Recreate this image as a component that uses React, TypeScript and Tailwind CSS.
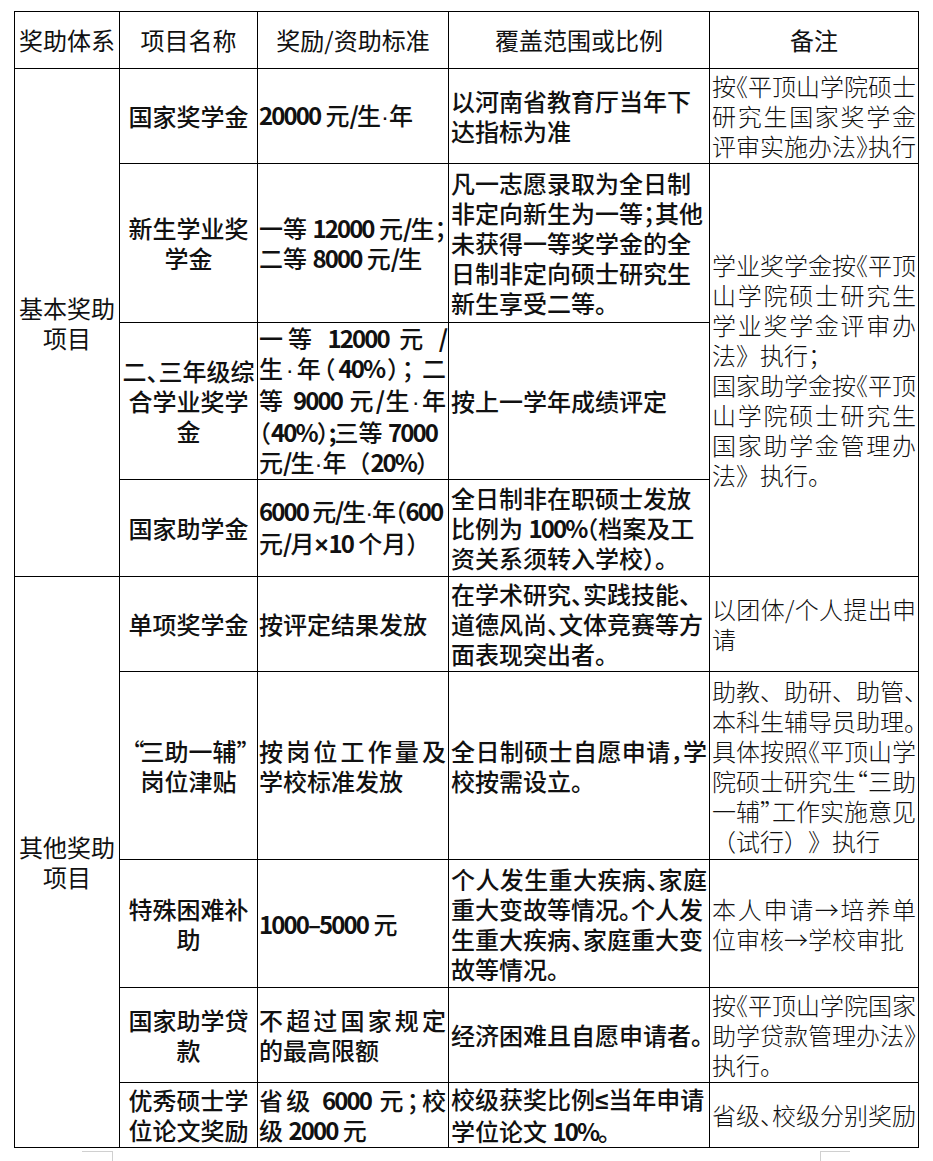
import React from 'react';

// ^x : punctuation glyph sits on the left half, trim the right half
// ~x : punctuation glyph sits on the right half, trim the left half
// {x / }x : quote mark set in its own box, glyph pushed right / left
// =  : line start marker, justify the whole line
// !  : line start marker, set the line a little tighter
const fmt = (s: string, bold?: boolean) =>
  s.split(/(\^.|~.|\{.|\}.|[0-9%/;–]+|[·×≤])/).map((p, i) => {
    if (!p) return null;
    if (p[0] === '^') return <span key={i} className="mr-[-0.5em]">{p[1]}</span>;
    if (p[0] === '~') return <span key={i} className="ml-[-0.5em]">{p[1]}</span>;
    if (p[0] === '{') return <span key={i} className="inline-block w-[20px] text-right">{p[1]}</span>;
    if (p[0] === '}') return <span key={i} className="inline-block w-[20px] text-left">{p[1]}</span>;
    if (/^[·×≤]$/.test(p))
      return (
        <span key={i} className={`font-['Liberation_Sans'] ${bold && p !== '·' ? 'font-bold' : ''}`}>
          {p}
        </span>
      );
    if (bold && /^[0-9%/;–]+$/.test(p))
      return (
        <span key={i} className="font-bold tracking-[-0.08em]">
          {p}
        </span>
      );
    return <React.Fragment key={i}>{p}</React.Fragment>;
  });

const Lines = ({ l, bold }: { l: string[]; bold?: boolean }) => (
  <>
    {l.map((s, i) => {
      const j = s.startsWith('=');
      const t = s.startsWith('!');
      const cls = j
        ? 'text-justify [text-align-last:justify]'
        : t
          ? 'whitespace-nowrap tracking-[-0.05em]'
          : 'whitespace-nowrap';
      return (
        <div key={i} className={cls}>
          {fmt(j || t ? s.slice(1) : s, bold)}
        </div>
      );
    })}
  </>
);

const td = 'border border-black align-middle p-0';
const cat = `${td} text-center font-normal`;
const name = `${td} text-center font-medium`;
const std = `${td} text-left font-medium pl-[1px] pr-[2px]`;
const scope = `${td} text-left font-medium px-[2px]`;
const note = `${td} text-left font-light px-[2px]`;

type Row = { h: string; c1?: string[]; span1?: number; name: string[]; std: string[]; scope: string[]; note?: string[]; span5?: number };

const rows: Row[] = [
  {
    h: 'h-[95px]',
    c1: ['基本奖助', '项目'],
    span1: 4,
    name: ['国家奖学金'],
    std: ['20000 元/生·年'],
    scope: ['以河南省教育厅当年下', '达指标为准'],
    note: ['按~《平顶山学院硕士', '=研究生国家奖学金', '评审实施办法^》执行'],
  },
  {
    h: 'h-[159px]',
    name: ['新生学业奖', '学金'],
    std: ['一等 12000 元/生^；', '二等 8000 元/生'],
    scope: ['凡一志愿录取为全日制', '非定向新生为一等^；其他', '未获得一等奖学金的全', '日制非定向硕士研究生', '新生享受二等。'],
    note: [
      '学业奖学金按~《平顶',
      '=山学院硕士研究生',
      '=学业奖学金评审办',
      '法》执行；',
      '国家助学金按~《平顶',
      '=山学院硕士研究生',
      '=国家助学金管理办',
      '法》执行。',
    ],
    span5: 3,
  },
  {
    h: 'h-[156px]',
    name: ['二^、三年级综', '合学业奖学', '金'],
    std: ['=一等 12000 元 /', '=生·年~（40%^）^； 二', '=等 9000 元/生·年', '~（40%^）;三等 7000', '元/生·年（20%）'],
    scope: ['按上一学年成绩评定'],
  },
  {
    h: 'h-[97px]',
    name: ['国家助学金'],
    std: ['!6000 元/生·年~（600', '元/月×10 个月）'],
    scope: ['全日制非在职硕士发放', '比例为 100%~（档案及工', '资关系须转入学校^）。'],
  },
  {
    h: 'h-[95px]',
    c1: ['其他奖助', '项目'],
    span1: 5,
    name: ['单项奖学金'],
    std: ['按评定结果发放'],
    scope: ['在学术研究^、实践技能^、', '道德风尚^、文体竞赛等方', '面表现突出者。'],
    note: ['=以团体/个人提出申', '请'],
  },
  {
    h: 'h-[188px]',
    name: ['{“三助一辅}”', '岗位津贴'],
    std: ['=按岗位工作量及', '学校标准发放'],
    scope: ['=全日制硕士自愿申请^，学', '校按需设立。'],
    note: ['助教、助研、助管^、', '本科生辅导员助理^。', '具体按照~《平顶山学', '院硕士研究生~“三助', '一辅^”工作实施意见', '（试行）》执行'],
  },
  {
    h: 'h-[128px]',
    name: ['特殊困难补', '助'],
    std: ['1000–5000 元'],
    scope: ['=个人发生重大疾病^、家庭', '重大变故等情况^。个人发', '生重大疾病^、家庭重大变', '故等情况。'],
    note: ['=本人申请→培养单', '位审核→学校审批'],
  },
  {
    h: 'h-[95px]',
    name: ['国家助学贷', '款'],
    std: ['=不超过国家规定', '的最高限额'],
    scope: ['经济困难且自愿申请者^。'],
    note: ['按~《平顶山学院国家', '助学贷款管理办法^》', '执行。'],
  },
  {
    h: 'h-[65px]',
    name: ['优秀硕士学', '位论文奖励'],
    std: ['=省级 6000 元^；校', '级 2000 元'],
    scope: ['校级获奖比例≤当年申请', '学位论文 10%。'],
    note: ['省级^、校级分别奖励'],
  },
];

export default function App() {
  return (
    <div className="min-h-screen bg-white text-[#111] font-['Noto_Sans_CJK_SC','Noto_Sans',sans-serif] text-[24px] leading-[30px] [text-spacing-trim:space-all]">
      <div className="pl-[14px] pt-[11px]">
        <table className="table-fixed border-collapse w-[904px]">
          <colgroup>
            <col className="w-[105px]" />
            <col className="w-[138px]" />
            <col className="w-[191px]" />
            <col className="w-[261px]" />
            <col className="w-[209px]" />
          </colgroup>
          <thead>
            <tr className="h-[57px]">
              <th className={cat}>奖助体系</th>
              <th className={cat}>项目名称</th>
              <th className={cat}>奖励/资助标准</th>
              <th className={cat}>覆盖范围或比例</th>
              <th className={cat}>备注</th>
            </tr>
          </thead>
          <tbody>
            {rows.map((r, i) => (
              <tr key={i} className={r.h}>
                {r.c1 && (
                  <td rowSpan={r.span1} className={cat}>
                    <Lines l={r.c1} />
                  </td>
                )}
                <td className={name}>
                  <Lines l={r.name} />
                </td>
                <td className={std}>
                  <Lines l={r.std} bold />
                </td>
                <td className={scope}>
                  <Lines l={r.scope} bold />
                </td>
                {r.note && (
                  <td rowSpan={r.span5} className={note}>
                    <Lines l={r.note} />
                  </td>
                )}
              </tr>
            ))}
          </tbody>
        </table>
      </div>
      {/* page corner marks */}
      <div className="flex h-[14px]">
        <div className="ml-[82px] mt-[3px] w-[31px] border-t border-r border-[#d0d0d0]" />
        <div className="ml-[707px] mt-[3px] w-[30px] border-t border-l border-[#d0d0d0]" />
      </div>
    </div>
  );
}
